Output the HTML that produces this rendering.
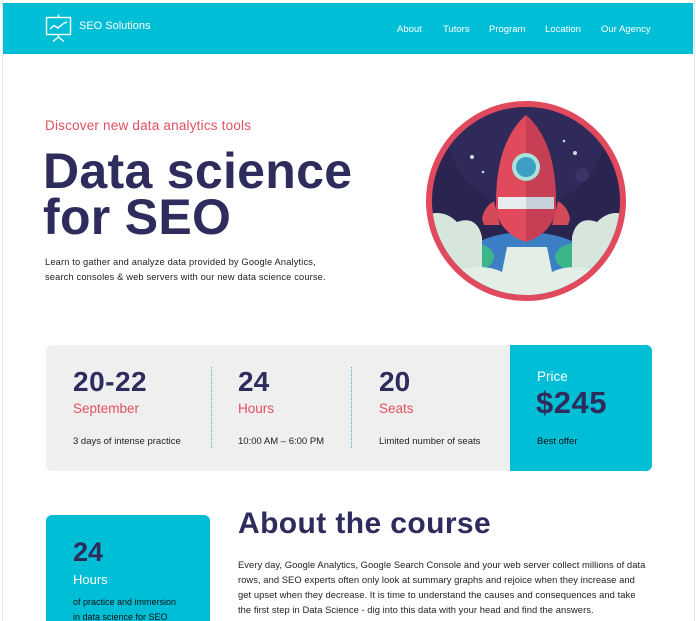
<!DOCTYPE html>
<html><head><meta charset="utf-8"><style>
*{margin:0;padding:0;box-sizing:border-box}
html,body{width:696px;height:621px;overflow:hidden}
body{background:#fff;font-family:"Liberation Sans",sans-serif;position:relative}
.frame{position:absolute;left:2px;top:0;width:693px;height:621px;border-left:1px solid #e4e4e4;border-right:1px solid #e4e4e4}
.hdr{position:absolute;left:3px;top:3px;width:690px;height:51px;background:#00bed6}
.abs{position:absolute;white-space:nowrap}
.nav{font-size:9.5px;color:#fff;top:24px}
.navy{color:#2e2c5c}
.red{color:#e2505f}
</style></head><body>
<div class="frame"></div>
<div class="hdr"></div>
<svg class="abs" style="left:44px;top:13px" width="30" height="30" viewBox="0 0 30 30">
<g fill="none" stroke="#fff" stroke-width="1.4">
<rect x="2.5" y="4.5" width="24" height="17"/>
<line x1="14.5" y1="1.5" x2="14.5" y2="4.5"/>
<line x1="14.5" y1="21.5" x2="14.5" y2="24"/>
<path d="M9 28.5 L14.5 24 L20 28.5"/>
<path d="M6 16 L10 12.5 L14 15 L19.5 10.5 L23 9"/>
</g></svg>
<div class="abs" style="left:79px;top:20px;font-size:11px;color:#fff">SEO Solutions</div>
<div class="abs nav" style="left:397px">About</div>
<div class="abs nav" style="left:443px">Tutors</div>
<div class="abs nav" style="left:489px">Program</div>
<div class="abs nav" style="left:545px">Location</div>
<div class="abs nav" style="left:601px">Our Agency</div>

<div class="abs red" style="left:45px;top:118px;font-size:13.5px;letter-spacing:0.2px">Discover new data analytics tools</div>
<div class="abs navy" style="left:43px;top:148px;font-size:50px;font-weight:bold;line-height:46px;letter-spacing:0.3px">Data science<br>for SEO</div>
<div class="abs" style="left:45px;top:255px;font-size:9.3px;line-height:15px;color:#222;letter-spacing:0.15px">Learn to gather and analyze data provided by Google Analytics,<br>search consoles &amp; web servers with our new data science course.</div>

<svg class="abs" style="left:422px;top:97px" width="208" height="208" viewBox="0 0 208 208">
<defs><clipPath id="c"><circle cx="104" cy="104" r="94"/></clipPath></defs>
<circle cx="104" cy="104" r="100" fill="#e04a5c"/>
<circle cx="104" cy="104" r="94" fill="#2a2450"/>
<g clip-path="url(#c)">
<circle cx="104" cy="30" r="80" fill="#332f60" opacity=".6"/>
<ellipse cx="104" cy="185" rx="80" ry="50" fill="#3d7fc4"/>
<ellipse cx="50" cy="160" rx="22" ry="14" fill="#3db58a"/>
<ellipse cx="155" cy="160" rx="22" ry="14" fill="#3db58a"/>
<path d="M0 120 Q20 110 35 125 Q55 118 60 140 L60 208 L0 208Z" fill="#d6e6dc"/>
<path d="M208 120 Q190 110 175 125 Q155 118 150 140 L150 208 L208 208Z" fill="#d6e6dc"/>
<path d="M30 175 Q60 165 80 175 L85 150 L125 150 L130 175 Q150 165 180 175 L190 208 L20 208Z" fill="#e2eee6"/>
<path d="M60 122 Q62 110 72 104 L78 128 L62 128Z" fill="#d44a58"/>
<path d="M148 122 Q146 110 136 104 L130 128 L146 128Z" fill="#d44a58"/>
<path d="M104 18 Q135 45 134 110 Q132 135 104 145 Q76 135 74 110 Q73 45 104 18Z" fill="#e04a5c"/>
<path d="M104 18 Q135 45 134 110 Q132 135 104 145Z" fill="#c63f54"/>
<rect x="76" y="100" width="56" height="12" fill="#e8eef0"/>
<rect x="104" y="100" width="28" height="12" fill="#c7d2dc"/>
<circle cx="104" cy="70" r="14" fill="#a8e2d8"/>
<circle cx="104" cy="70" r="10" fill="#3d9fc4"/>
<g fill="#cfd8e8"><circle cx="50" cy="60" r="2"/><circle cx="61" cy="75" r="1.3"/><circle cx="153" cy="56" r="2"/><circle cx="142" cy="44" r="1.3"/></g>
<circle cx="160" cy="78" r="7" fill="#3a3566"/>
</g>
</svg>

<div class="abs" style="left:46px;top:345px;width:606px;height:126px;background:#efefef;border-radius:6px"></div>
<div class="abs" style="left:510px;top:345px;width:142px;height:126px;background:#00bed6;border-radius:0 6px 6px 0"></div>
<div class="abs" style="left:211px;top:367px;height:81px;border-left:1px dotted #3cb8cc"></div>
<div class="abs" style="left:351px;top:367px;height:81px;border-left:1px dotted #3cb8cc"></div>

<div class="abs navy" style="left:73px;top:366px;font-size:28px;font-weight:bold;letter-spacing:0.5px">20-22</div>
<div class="abs red" style="left:73px;top:401px;font-size:13.5px">September</div>
<div class="abs" style="left:73px;top:436px;font-size:9.5px;color:#222">3 days of intense practice</div>
<div class="abs navy" style="left:238px;top:366px;font-size:28px;font-weight:bold">24</div>
<div class="abs red" style="left:238px;top:401px;font-size:13.5px">Hours</div>
<div class="abs" style="left:238px;top:436px;font-size:9.5px;color:#222">10:00 AM – 6:00 PM</div>
<div class="abs navy" style="left:379px;top:366px;font-size:28px;font-weight:bold">20</div>
<div class="abs red" style="left:379px;top:401px;font-size:13.5px">Seats</div>
<div class="abs" style="left:379px;top:436px;font-size:9.5px;color:#222">Limited number of seats</div>
<div class="abs" style="left:537px;top:369px;font-size:13.5px;color:#fff">Price</div>
<div class="abs navy" style="left:536px;top:385px;font-size:31px;font-weight:bold;letter-spacing:0.5px">$245</div>
<div class="abs" style="left:537px;top:436px;font-size:9.5px;color:#111">Best offer</div>

<div class="abs" style="left:46px;top:515px;width:164px;height:120px;background:#00bed6;border-radius:6px"></div>
<div class="abs navy" style="left:73px;top:537px;font-size:27px;font-weight:bold">24</div>
<div class="abs" style="left:73px;top:572px;font-size:13px;color:#fff">Hours</div>
<div class="abs" style="left:73px;top:595px;font-size:9px;line-height:15px;color:#111">of practice and immersion<br>in data science for SEO</div>

<div class="abs navy" style="left:238px;top:507px;font-size:30px;font-weight:bold;letter-spacing:0.4px">About the course</div>
<div class="abs" style="left:238px;top:557px;font-size:9.4px;line-height:15px;color:#222;letter-spacing:0.05px">Every day, Google Analytics, Google Search Console and your web server collect millions of data<br>rows, and SEO experts often only look at summary graphs and rejoice when they increase and<br>get upset when they decrease. It is time to understand the causes and consequences and take<br>the first step in Data Science - dig into this data with your head and find the answers.</div>
</body></html>
